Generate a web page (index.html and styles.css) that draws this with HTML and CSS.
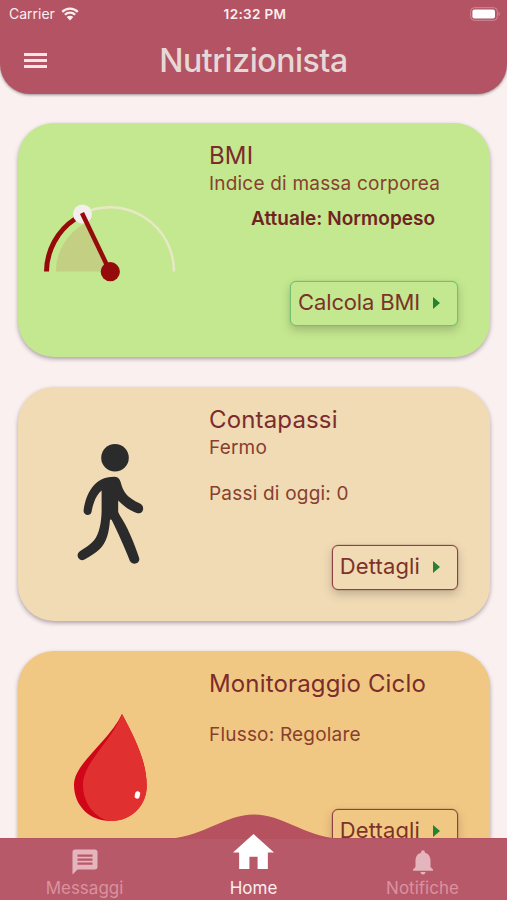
FILE: index.html
```html
<!DOCTYPE html>
<html lang="it">
<head>
  <meta charset="UTF-8">
  <meta name="viewport" content="width=device-width, initial-scale=1.0">
  <title>Nutrizionista</title>
  <link rel="stylesheet" href="styles.css">
</head>
<body>

  <header class="header">
    <div class="status-bar">
      <div class="carrier">
        <span>Carrier</span>
        <svg class="wifi" viewBox="0 0 18 14">
          <path d="M1.2 4.9a11.1 11.1 0 0 1 15.6 0M3.9 7.8a7.2 7.2 0 0 1 10.2 0" fill="none" stroke="currentColor" stroke-width="2.3"/>
          <path d="M5.7 10a4.7 4.7 0 0 1 6.6 0L9 13.5z" fill="currentColor"/>
        </svg>
      </div>
      <span class="clock">12:32 PM</span>
      <svg class="battery" viewBox="0 0 31 14">
        <rect x=".7" y=".7" width="26.6" height="12.6" rx="3.6" fill="none" stroke="#cf8c97" stroke-width="1"/>
        <rect x="2.4" y="2.4" width="22.6" height="9.2" rx="2" fill="#fff"/>
        <path d="M28.7 4.8q2.4 2.2 0 4.4z" fill="#cf8c97"/>
      </svg>
    </div>
    <div class="app-bar">
      <button class="menu" aria-label="Menu"><span></span><span></span><span></span></button>
      <h1>Nutrizionista</h1>
    </div>
  </header>

  <main class="cards">
    <section class="card bmi">
      <svg class="art" viewBox="18 123 191 234">
        <path d="M56 271.5a54 54 0 0 1 29-47.9l25 47.9z" fill="#c3cf83"/>
        <path d="M82.5 213.5A64 64 0 0 1 174 271.5" fill="none" stroke="#e7e8c4" stroke-width="2.5"/>
        <path d="M46.5 271.5A64 64 0 0 1 75 219" fill="none" stroke="#950b0b" stroke-width="5"/>
        <circle cx="82.5" cy="214" r="9.5" fill="#f4efec"/>
        <path d="M82 213L110 271.5" stroke="#950b0b" stroke-width="4.5"/>
        <circle cx="110.3" cy="271.7" r="9.6" fill="#950b0b"/>
      </svg>
      <div class="info">
        <h2>BMI</h2>
        <p>Indice di massa corporea</p>
        <p class="current">Attuale: Normopeso</p>
        <button class="action">Calcola BMI</button>
      </div>
    </section>

    <section class="card steps">
      <svg class="art" viewBox="18 387 191 234">
        <g fill="#2b2b2b">
          <circle cx="115" cy="457.7" r="13.8"/>
          <path d="M114 476.8c3.5 0 5.7 1.7 6.6 5.2 2.4 9.3 5.7 15.2 19.4 21.6 5.8 2.8 3 11.6-3.3 9.400-6.400-2.300-11.700-5.500-18.500-12.500V512l1.700 3.500C127 526 134 542 139 557.500c2 6.400-6.700 8.500-9.200 3.200C124 546 119 535 111.600 519.800L110 519.500c-1 14-3.500 23-10.500 29.800-4 3.700-9 7-15 10.300-5.300 2.600-9.800-4.700-4.600-8.400 5.800-3.400 10.700-6.800 14-10.600 5.500-6.600 7.800-19 7.700-31.600V490.500c-5.500 4.500-8.400 12.500-10 21.200-1 5-8.600 4.200-8-1.500 2.500-17 10.900-33.400 30.400-33.400z"/>
        </g>
      </svg>
      <div class="info">
        <h2>Contapassi</h2>
        <p>Fermo</p>
        <p class="today">Passi di oggi: 0</p>
        <button class="action">Dettagli</button>
      </div>
    </section>

    <section class="card cycle">
      <svg class="art" viewBox="18 651 191 234">
        <path d="M122 714C108 743 74 763 74 785c0 21 16 36 36.500 36S146.700 805 146.700 786c0-25-12-48-24.700-72z" fill="#cf0718"/>
        <path d="M122 714C112 741 83 762 83 785c0 17 10 31 25 35.800 22 2 38.700-14 38.700-34.800 0-25-12-48-24.700-72z" fill="#e13030"/>
        <rect x="134.9" y="791.2" width="5" height="7.4" rx="2.2" fill="#fff" transform="rotate(14 137.4 795)"/>
      </svg>
      <div class="info">
        <h2>Monitoraggio Ciclo</h2>
        <p class="flow">Flusso: Regolare</p>
        <button class="action">Dettagli</button>
      </div>
    </section>
  </main>

  <nav class="tabs">
    <svg class="bump" viewBox="0 0 170 26">
      <path d="M0 26C38 22 56 1.500 85 1.500S132 22 170 26z" fill="#b6525f"/>
    </svg>
    <a class="tab">
      <svg class="icon" viewBox="0 0 24 24"><path fill="currentColor" d="M20 2H4c-1.100 0-2 .9-2 2v18l4-4h14c1.100 0 2-.9 2-2V4c0-1.100-.9-2-2-2zM6 6h12v1.800H6zM6 9.200h12V11H6zM6 12.400h12v1.800H6z" fill-rule="evenodd"/></svg>
      <span>Messaggi</span>
    </a>
    <a class="tab active">
      <svg class="icon" viewBox="2 3 20 17"><path fill="currentColor" d="M10 20v-6h4v6h5v-8h3L12 3 2 12h3v8z"/></svg>
      <span>Home</span>
    </a>
    <a class="tab">
      <svg class="icon" viewBox="0 0 24 24"><path fill="currentColor" d="M12 22c1.100 0 2-.9 2-2h-4c0 1.100.9 2 2 2zm6-6v-5c0-3.070-1.640-5.640-4.500-6.320V4c0-.83-.67-1.500-1.500-1.500s-1.500.67-1.500 1.500v.68C7.630 5.360 6 7.920 6 11v5l-2 2v1h16v-1l-2-2z"/></svg>
      <span>Notifiche</span>
    </a>
  </nav>

</body>
</html>
```
FILE: styles.css
```css
* {
  box-sizing: border-box;
}

body {
  margin: 0;
  height: 100vh;
  display: flex;
  flex-direction: column;
  overflow: hidden;
  background-color: #faf0f0;
  font-family: Inter, sans-serif;
  color: #7b2c2c;
}

h1, h2, p {
  margin: 0;
  font-weight: 400;
  white-space: nowrap;
}

button {
  font-family: inherit;
  background: none;
  border: none;
  padding: 0;
}

/* Header */
.header {
  flex: none;
  height: 94px;
  background-color: #b35363;
  border-radius: 0 0 30px 30px;
  box-shadow: 0 1px 3px rgba(0, 0, 0, 0.4);
}

.status-bar {
  display: grid;
  grid-template-columns: 1fr auto 1fr;
  align-items: center;
  height: 27px;
  padding: 0 6px 0 9px;
  font-size: 14px;
  color: #fbeeee;
}

.carrier {
  display: flex;
  align-items: center;
  gap: 6px;
}

.wifi {
  width: 18px;
  height: 14px;
}

.clock {
  font-size: 13.5px;
  font-weight: 600;
  letter-spacing: 0.35px;
}

.battery {
  width: 31px;
  height: 14px;
  justify-self: end;
}

.app-bar {
  display: grid;
  grid-template-columns: 46px 1fr 46px;
  align-items: center;
  height: 66px;
}

.menu {
  display: flex;
  flex-direction: column;
  gap: 3px;
  width: 23px;
  margin-left: 24px;
}

.menu span {
  height: 3px;
  background-color: #f5e5e6;
}

.app-bar h1 {
  text-align: center;
  font-size: 32px;
  font-weight: 500;
  letter-spacing: -0.45px;
  color: #e5d8d6;
}

/* Cards */
.cards {
  flex: 1;
  min-height: 0;
  overflow: hidden;
  display: flex;
  flex-direction: column;
  gap: 30px;
  padding: 29px 17px 0 18px;
}

.card {
  flex: none;
  display: flex;
  height: 234px;
  border-radius: 36px;
  box-shadow: 0 2px 4px rgba(70, 50, 60, 0.42);
}

.bmi {
  background-color: #c4e88f;
}

.steps {
  background-color: #f0dbb5;
}

.cycle {
  background-color: #f1c883;
}

.art {
  flex: none;
  width: 191px;
  height: 234px;
}

.info {
  flex: 1;
  display: flex;
  flex-direction: column;
  align-items: flex-start;
  padding: 18px 32px 31px 0;
  background-color: inherit;
  border-radius: inherit;
}

.info h2 {
  font-size: 24px;
  line-height: 30px;
  letter-spacing: 0.15px;
}

.info p {
  padding-top: 1px;
  font-size: 19px;
  line-height: 24px;
  letter-spacing: 0.2px;
  color: #87402f;
}

.info .current {
  margin: 11px 0 0 42px;
  padding-top: 0;
  font-weight: 600;
  letter-spacing: 0.05px;
  color: #702322;
}

.info .today {
  margin-top: 21px;
}

.info .flow {
  margin-top: 23px;
}

.action {
  display: flex;
  align-items: center;
  gap: 13px;
  height: 45px;
  margin-top: auto;
  align-self: flex-end;
  padding: 0 17px 4px 7px;
  border: 1px solid #8f3f45;
  border-radius: 6px;
  background-color: inherit;
  box-shadow: 0 0 0 0.5px rgba(143, 63, 69, 0.3), 0 4px 10px rgba(80, 70, 60, 0.3);
  font-size: 22px;
  letter-spacing: 0.15px;
  color: #7d3229;
}

.bmi .action {
  border-color: #72c071;
  box-shadow: 0 0 0 0.5px rgba(114, 192, 113, 0.3), 0 4px 10px rgba(80, 70, 60, 0.3);
  letter-spacing: -0.15px;
}

.action::after {
  content: "";
  margin-top: 3px;
  border-left: 7px solid #248230;
  border-top: 6px solid transparent;
  border-bottom: 6px solid transparent;
}

/* Bottom tabs */
.tabs {
  position: relative;
  flex: none;
  display: grid;
  grid-template-columns: repeat(3, 1fr);
  grid-template-rows: 100%;
  height: 62px;
  background-color: #b8596a;
  border-top: 1px solid #b35261;
}

/* Curve behind the selected tab */
.bump {
  position: absolute;
  top: -26px;
  left: 50%;
  width: 170px;
  height: 26px;
  transform: translateX(-50%);
}

.tab {
  position: relative;
  display: flex;
  flex-direction: column;
  align-items: center;
  justify-content: flex-end;
  padding-bottom: 2px;
  font-size: 17px;
  line-height: 20px;
  color: #e4b5bd;
}

.tab span {
  color: #d9929e;
}

.tab .icon {
  flex: none;
  width: 30px;
  height: 30px;
  margin-bottom: 1px;
}

.tab.active .icon {
  width: 41px;
  height: 35px;
  margin-bottom: 9px;
  color: #fff;
}

.tab.active span {
  color: #fbeeee;
}
```
